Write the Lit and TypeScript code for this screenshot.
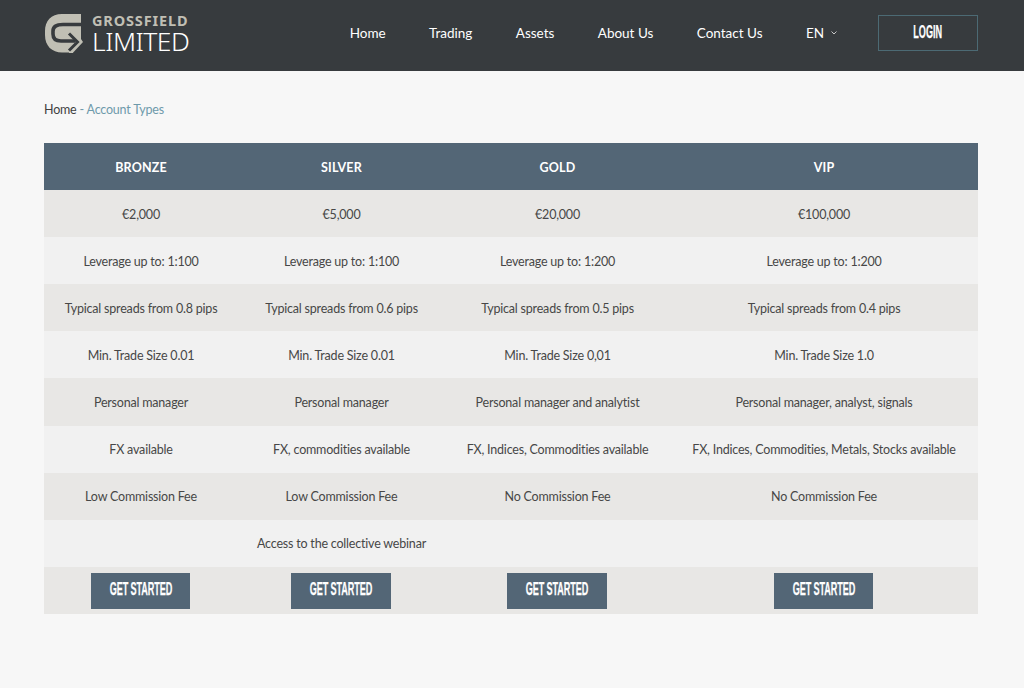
import { LitElement, html, css } from "lit";
import { customElement } from "lit/decorators.js";

const cols = [
  ["€2,000", "Leverage up to: 1:100", "Typical spreads from 0.8 pips", "Min. Trade Size 0.01", "Personal manager", "FX available", "Low Commission Fee", ""],
  ["€5,000", "Leverage up to: 1:100", "Typical spreads from 0.6 pips", "Min. Trade Size 0.01", "Personal manager", "FX, commodities available", "Low Commission Fee", "Access to the collective webinar"],
  ["€20,000", "Leverage up to: 1:200", "Typical spreads from 0.5 pips", "Min. Trade Size 0,01", "Personal manager and analytist", "FX, Indices, Commodities available", "No Commission Fee", ""],
  ["€100,000", "Leverage up to: 1:200", "Typical spreads from 0.4 pips", "Min. Trade Size 1.0", "Personal manager, analyst, signals", "FX, Indices, Commodities, Metals, Stocks available", "No Commission Fee", ""],
];
const heads = ["BRONZE", "SILVER", "GOLD", "VIP"];
const nav = ["Home", "Trading", "Assets", "About Us", "Contact Us"];

@customElement("app-root")
export class AppRoot extends LitElement {
  static styles = css`
    :host { display: block; min-height: 688px; background: #f7f7f7; font-family: "Lato", "Noto Sans", sans-serif; color: #4a4a4a; }
    header { height: 71px; background: #373b3e; display: flex; align-items: center; padding: 0 46px 5px 44px; box-sizing: border-box; }
    .logo { display: flex; align-items: center; gap: 8px; }
    .logo svg { display: block; }
    .words { display: flex; flex-direction: column; padding-top: 1px; }
    .g { font-family: "Noto Sans", sans-serif; font-size: 14.5px; font-weight: 700; color: #c0bfb4; letter-spacing: 0.85px; line-height: 14px; }
    .l { font-family: "Noto Sans", sans-serif; font-size: 26.5px; color: #fff; font-weight: 300; line-height: 28px; letter-spacing: -0.5px; }
    nav { margin-left: auto; display: flex; align-items: center; color: #fff; font-size: 13.5px; }
    nav a { margin-right: 43.4px; }
    .lang { display: flex; align-items: center; gap: 7px; margin-right: 41px; }
    .login { width: 100px; height: 36px; box-sizing: border-box; border: 1px solid #4c6a74; display: flex; align-items: center; justify-content: center; padding-bottom: 1px; }
    .cond { font-family: "Liberation Sans", sans-serif; font-weight: 700; color: #fff; font-size: 17.5px; display: inline-block; transform: scaleX(0.52); white-space: nowrap; -webkit-text-stroke: 0.25px #fff; }
    .crumb { padding: 30px 44px 0; font-size: 12.5px; letter-spacing: -0.2px; line-height: 17px; height: 42px; color: #3f3f3f; }
    .crumb span { color: #6e9aab; }
    .table { margin: 0 46px 0 44px; display: grid; grid-template-columns: 194px 207px 225px 308px; grid-auto-rows: 47.1px; }
    .c { display: flex; align-items: center; justify-content: center; font-size: 12.5px; letter-spacing: -0.2px; white-space: nowrap; color: #474747; padding-top: 1px; box-sizing: border-box; }
    .h { background: #536676; color: #fff; font-weight: 700; font-size: 12.5px; letter-spacing: 0.15px; }
    .d { background: #e8e7e5; }
    .e { background: #f1f1f1; }
    .btn { width: 99.500px; height: 36px; background: #536676; display: flex; align-items: center; justify-content: center; margin-right: 1px; padding-bottom: 2px; box-sizing: border-box; }
  `;
  render() {
    return html`
      <header>
        <div class="logo">
          <svg width="40" height="40" viewBox="4 4 40 40">
            <path fill="#c0bfb4" d="M41 5H22C11 5 5 12 5 22V26C5 37 12 43.500 22 43.500H29V48L43 33 41 30V5Z"/>
            <path fill="none" stroke="#373b3e" stroke-width="3.600" d="M42 15.500H23C16 15.500 13 18 13 22V25C13 30 16 32 21 32H35"/>
            <path fill="none" stroke="#373b3e" stroke-width="3" d="M29 24.500L37.500 33 29 41.500"/>
          </svg>
          <div class="words"><div class="g">GROSSFIELD</div><div class="l">LIMITED</div></div>
        </div>
        <nav>
          ${nav.map((n) => html`<a>${n}</a>`)}
          <div class="lang">EN <svg width="6" height="4" viewBox="0 0 6 4"><path d="M.5.500 3 3 5.500.5" fill="none" stroke="#c8c8c8" stroke-width="1"/></svg></div>
          <div class="login"><span class="cond">LOGIN</span></div>
        </nav>
      </header>
      <div class="crumb">Home <span>- Account Types</span></div>
      <div class="table">
        ${heads.map((h) => html`<div class="c h">${h}</div>`)}
        ${cols[0].map((_, r) => cols.map((c) => html`<div class="c ${r % 2 ? "e" : "d"}">${c[r]}</div>`))}
        ${heads.map(() => html`<div class="c d"><div class="btn"><span class="cond">GET STARTED</span></div></div>`)}
      </div>
    `;
  }
}
